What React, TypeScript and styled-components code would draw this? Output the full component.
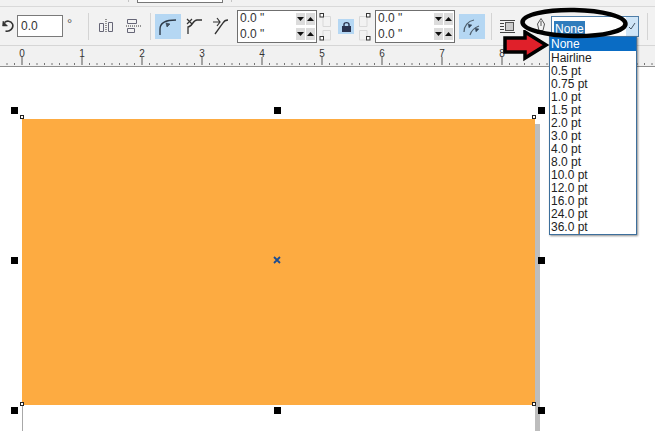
import React from 'react';
import styled, { createGlobalStyle } from 'styled-components';

const WIDTHS = ['None', 'Hairline', '0.5 pt', '0.75 pt', '1.0 pt', '1.5 pt', '2.0 pt', '3.0 pt', '4.0 pt', '8.0 pt', '10.0 pt', '12.0 pt', '16.0 pt', '24.0 pt', '36.0 pt'];

const HANDLES = [
  [14, 110], [277, 110], [541, 110],
  [14, 260], [541, 260],
  [14, 410], [277, 410], [541, 410],
];

const CORNERS = [
  [22, 117], [534, 117],
  [22, 404], [534, 404],
];

const Ruler = () => {
  const ticks: React.ReactNode[] = [];
  for (let i = -2; i < 86; i++) {
    const x = 22 + i * 7.5;
    const major = i % 8 === 0;
    ticks.push(
      <line key={i} x1={x} x2={x} y1={major ? 11 : 17} y2={19} stroke={major ? '#555' : '#777'} strokeWidth={1} />
    );
  }
  return (
    <svg width="655" height="20" viewBox="0 0 655 20">
      {ticks}
      {/* 9 and 10 sit under the open dropdown */}
      {Array.from({ length: 9 }, (_, n) => (
        <text key={n} x={22 + n * 60} y={11} textAnchor="middle" fontSize="10" fill="#333" fontFamily="Liberation Sans, sans-serif">
          {n}
        </text>
      ))}
    </svg>
  );
};

const RotateIcon = () => (
  <svg width="12" height="14" viewBox="0 0 12 14" fill="none" stroke="#333" strokeWidth="1.6">
    <path d="M2.5 3.5 C4.5 1.5 9 1.5 10.5 5 C12 9 8 13 3.5 12" />
    <path d="M0.5 7 L5.5 7 L1 2 Z" fill="#333" strokeWidth="0.5" />
  </svg>
);

const AlignVerticalIcon = () => (
  <svg width="16" height="16" viewBox="0 0 16 16" fill="none" stroke="#667" strokeWidth="1">
    <path d="M1.5 5.5 h4 v8 h-4 z M10.5 4.5 h4 v9 h-4 z" />
    <path d="M8 1 V15" stroke="#333" strokeDasharray="1 1" />
  </svg>
);

const AlignHorizontalIcon = () => (
  <svg width="16" height="16" viewBox="0 0 16 16" fill="none" stroke="#667" strokeWidth="1">
    <path d="M2.5 1.5 h9 v4 h-9 z M2.5 10.5 h7 v4 h-7 z" />
    <path d="M1 8 H16" stroke="#333" strokeDasharray="1 1" />
  </svg>
);

const FilletIcon = () => (
  <svg width="26" height="25" viewBox="0 0 26 25" fill="none" stroke="#2d3a48" strokeWidth="1.4">
    <path d="M5 21 V15 C5 9 10 6 21 6" />
    <path d="M11 9 L15 10 L12 13 Z" fill="#405060" strokeWidth="0.6" />
  </svg>
);

const ScallopIcon = () => (
  <svg width="17" height="18" viewBox="0 0 17 18" fill="none" stroke="#333" strokeWidth="1.3">
    <path d="M2 17 V10 C6 10 7 3 11 3 H16" />
    <path d="M1 2 L6 7 M6 2 L1 7" strokeWidth="1.2" />
  </svg>
);

const ChamferIcon = () => (
  <svg width="17" height="18" viewBox="0 0 17 18" fill="none" stroke="#333" strokeWidth="1.3">
    <path d="M3 17 L11 6 C12 4 13 3 16 3" />
    <path d="M1 5 H8 M5 1 L8 5 L5 9" strokeWidth="1.2" />
  </svg>
);

const RelativeCornerIcon = () => (
  <svg width="26" height="25" viewBox="0 0 26 25" fill="none" stroke="#50606e" strokeWidth="1.2">
    <path d="M5 18 C5 12 9 7 15 6" />
    <path d="M11 21 C12 17 15 14 20 12" />
    <path d="M9 10 L13 11 L10 14 Z M16 14 L20 15 L17 18 Z" fill="#2d4058" strokeWidth="0.5" />
  </svg>
);

const WrapIcon = () => (
  <svg width="15" height="15" viewBox="0 0 15 15" fill="none" stroke="#444" strokeWidth="1">
    <path d="M0 1.5 H15 M0 4.5 H4 M0 7.5 H4 M0 10.5 H4 M0 13.5 H15" />
    <rect x="5.5" y="3.5" width="8" height="8" fill="#ccc" stroke="#555" />
  </svg>
);

const PenIcon = () => (
  <svg width="10" height="17" viewBox="0 0 10 17" fill="none" stroke="#555" strokeWidth="1">
    <path d="M5 0.5 L8.5 6 L7 12.5 H3 L1.5 6 Z" />
    <path d="M5 3 V8 M1 15.5 H9" />
  </svg>
);

const LockIcon = () => (
  <svg width="11" height="11" viewBox="0 0 11 11" fill="none">
    <path d="M3 5 V3.5 C3 1 8 1 8 3.5 V5" stroke="#29324e" strokeWidth="1.4" />
    <rect x="1" y="5" width="9" height="6" fill="#29324e" />
  </svg>
);

const CornerLinkIcon = ({ flip }: { flip?: boolean }) => (
  <svg width="12" height="33" viewBox="0 0 12 33" fill="none" transform={flip ? 'scale(-1 1)' : undefined}>
    <path d="M0.5 6.5 H8 V16.5 H0.5 Z M0.5 20.5 H8 V30 H0.5 Z" stroke="#d8d8d8" />
    <rect x="7.5" y="3.5" width="3.5" height="3.5" stroke="#333" fill="#fff" />
    <rect x="7.5" y="26.5" width="3.5" height="3.5" stroke="#333" fill="#fff" />
  </svg>
);

const SpinRow = () => (
  <SpinnerRow>
    <SpinnerValue>0.0 "</SpinnerValue>
    <SpinButton>
      <svg width="7" height="4"><path d="M0 0 H7 L3.5 4 Z" fill="#111" /></svg>
    </SpinButton>
    <SpinButton>
      <svg width="7" height="4"><path d="M0 4 H7 L3.5 0 Z" fill="#111" /></svg>
    </SpinButton>
  </SpinnerRow>
);

const Spinner = ({ $ml }: { $ml: number }) => (
  <SpinnerGroup $ml={$ml}>
    <SpinRow />
    <SpinRow />
  </SpinnerGroup>
);

const App: React.FC = () => {
  return (
    <Page>
      <GlobalStyle />
      <TopStrip>
        <TabTick />
        <TopTab />
        <TabTick />
      </TopStrip>
      <Toolbar>
        <ToolSlot $ml={0}><RotateIcon /></ToolSlot>
        <AngleInput>0.0</AngleInput>
        <Degree>°</Degree>
        <Separator $ml={14} />
        <ToolSlot $ml={9}><AlignVerticalIcon /></ToolSlot>
        <ToolSlot $ml={11}><AlignHorizontalIcon /></ToolSlot>
        <Separator $ml={9} />
        <ActiveButton $ml={4}><FilletIcon /></ActiveButton>
        <ToolSlot $ml={5}><ScallopIcon /></ToolSlot>
        <ToolSlot $ml={9}><ChamferIcon /></ToolSlot>
        <Spinner $ml={8} />
        <ToolSlot $ml={2}><CornerLinkIcon flip /></ToolSlot>
        <LockButton><LockIcon /></LockButton>
        <ToolSlot $ml={5}><CornerLinkIcon /></ToolSlot>
        <Spinner $ml={4} />
        <ActiveButton $ml={4}><RelativeCornerIcon /></ActiveButton>
        <Separator $ml={6} />
        <ToolSlot $ml={8}><WrapIcon /></ToolSlot>
        <ToolSlot $ml={21}><PenIcon /></ToolSlot>
        <Combo>
          <ComboField><ComboSelection>None</ComboSelection></ComboField>
          <ComboArrow>
            <svg width="8" height="8" viewBox="0 0 8 8" fill="none" stroke="#456">
              <path d="M1 5 L3 7 L7 1" />
            </svg>
          </ComboArrow>
        </Combo>
        <Separator $ml={8} />
      </Toolbar>
      <RulerBar>
        <Ruler />
      </RulerBar>
      <Canvas>
        <PageEdge />
        <Shadow />
        <OrangeRect />
        {HANDLES.map(([x, y]) => (
          <Handle key={`${x}-${y}`} style={{ left: x - 3.5, top: y - 70.5 }} />
        ))}
        {CORNERS.map(([x, y]) => (
          <CornerNode key={`${x}-${y}`} style={{ left: x - 2, top: y - 69 }} />
        ))}
        <CenterMark viewBox="0 0 8 8">
          <path d="M1 1 L7 7 M7 1 L1 7" stroke="#1d4d90" strokeWidth="1.8" fill="none" />
        </CenterMark>
      </Canvas>
      <Dropdown>
        {WIDTHS.map((w, i) => (
          <DropdownItem key={w} $selected={i === 0}>{w}</DropdownItem>
        ))}
      </Dropdown>
      <EllipseMark viewBox="0 0 116 40">
        <ellipse cx="56" cy="17" rx="51.5" ry="13" fill="none" stroke="#000" strokeWidth="4.5" transform="rotate(1 56 17)" />
      </EllipseMark>
      <ArrowMark viewBox="0 0 46 32">
        <path d="M2 8 H22 V2 L43 15 L22 28 V22 H2 Z" fill="#e0202a" stroke="#000" strokeWidth="3.5" />
      </ArrowMark>
    </Page>
  );
};

export default App;

// Styles
const GlobalStyle = createGlobalStyle`
  html, body {
    margin: 0;
    padding: 0;
    background: #fff;
  }
`;

const Page = styled.div`
  position: relative;
  width: 655px;
  height: 431px;
  overflow: hidden;
  display: flex;
  flex-direction: column;
  background: #fff;
  font-family: "Liberation Sans", Arial, sans-serif;
`;

const TopStrip = styled.div`
  height: 6px;
  padding-left: 128px;
  display: flex;
  align-items: flex-start;
  gap: 8px;
  background: #f1f1f1;
  border-bottom: 1px solid #d9d9d9;
`;

const TabTick = styled.div`
  width: 1px;
  height: 2px;
  background: #c4c4c4;
`;

const TopTab = styled.div`
  box-sizing: border-box;
  width: 86px;
  height: 3px;
  background: #fff;
  border: 1px solid #777;
  border-top: none;
`;

const Toolbar = styled.div`
  box-sizing: border-box;
  height: 39px;
  padding-left: 2px;
  display: flex;
  align-items: center;
  background: #f2f2f2;
  border-bottom: 1px solid #d6d6d6;
`;

const ToolSlot = styled.div<{ $ml: number }>`
  margin-left: ${(p) => p.$ml}px;
  display: flex;
  align-items: center;
`;

const AngleInput = styled.div`
  box-sizing: border-box;
  width: 46px;
  height: 22px;
  margin-left: 3px;
  padding-left: 3px;
  background: #fff;
  border: 1px solid #7a7a7a;
  font-size: 12px;
  line-height: 20px;
  color: #333;
`;

const Degree = styled.div`
  width: 7px;
  margin-left: 4px;
  margin-bottom: 6px;
  font-size: 13px;
  color: #555;
`;

const Separator = styled.div<{ $ml: number }>`
  width: 1px;
  height: 27px;
  margin-left: ${(p) => p.$ml}px;
  background: #d4d4d4;
`;

const ActiveButton = styled.div<{ $ml: number }>`
  width: 26px;
  height: 25px;
  margin-left: ${(p) => p.$ml}px;
  background: #b5d7f3;
`;

const LockButton = styled.div`
  width: 16px;
  height: 15px;
  margin-left: 7px;
  display: flex;
  align-items: center;
  justify-content: center;
  background: #b5d7f3;
`;

const SpinnerGroup = styled.div<{ $ml: number }>`
  box-sizing: border-box;
  width: 80px;
  height: 33px;
  margin-left: ${(p) => p.$ml}px;
  margin-top: 1px;
  display: flex;
  flex-direction: column;
  background: #fff;
  border: 1px solid #6f6f6f;
`;

const SpinnerRow = styled.div`
  flex: 1;
  display: flex;
  align-items: center;
  gap: 1px;
  padding-right: 1px;
`;

const SpinnerValue = styled.div`
  flex: 1;
  padding-left: 2px;
  font-size: 12px;
  line-height: 15px;
  color: #333;
`;

const SpinButton = styled.div`
  width: 9px;
  height: 12px;
  display: flex;
  align-items: center;
  justify-content: center;
  background: #dcdcdc;
`;

const Combo = styled.div`
  box-sizing: border-box;
  width: 88px;
  height: 21px;
  margin-left: 5px;
  display: flex;
  background: #fff;
  border: 1px solid #4f7ea8;
`;

const ComboField = styled.div`
  flex: 1;
  padding: 2px 0 0 2px;
`;

const ComboSelection = styled.span`
  padding: 1px;
  background: #2f7cbc;
  color: #fff;
  font-size: 12px;
`;

const ComboArrow = styled.div`
  width: 12px;
  display: flex;
  align-items: center;
  justify-content: center;
  background: #cfe5f7;
`;

const RulerBar = styled.div`
  height: 20px;
  background: #f1f1f1;
  border-bottom: 1px solid #8f8f8f;
  line-height: 0;
`;

const Canvas = styled.div`
  position: relative;
  flex: 1;
  background: #fff;
`;

const OrangeRect = styled.div`
  position: absolute;
  left: 22px;
  top: 52px;
  width: 513px;
  height: 286px;
  background: #fdab41;
`;

const Shadow = styled.div`
  position: absolute;
  left: 535px;
  top: 57px;
  bottom: 0;
  width: 5px;
  background: #bdbdbd;
`;

const PageEdge = styled.div`
  position: absolute;
  left: 22px;
  top: 300px;
  bottom: 0;
  width: 1px;
  background: #a8a8a8;
`;

const Handle = styled.div`
  position: absolute;
  width: 7px;
  height: 7px;
  background: #000;
`;

const CornerNode = styled.div`
  position: absolute;
  box-sizing: border-box;
  width: 4px;
  height: 4px;
  background: #fff;
  border: 1px solid #222;
`;

const CenterMark = styled.svg`
  position: absolute;
  left: 273px;
  top: 189px;
  width: 8px;
  height: 8px;
`;

const Dropdown = styled.div`
  position: absolute;
  left: 549px;
  top: 36px;
  box-sizing: border-box;
  width: 88px;
  height: 199px;
  background: #fff;
  border: 1px solid #3d6f9c;
  box-shadow: 1px 1px 2px rgba(0, 0, 0, 0.45);
`;

const DropdownItem = styled.div<{ $selected: boolean }>`
  height: ${(p) => (p.$selected ? 14 : 13)}px;
  padding-left: 1px;
  font-size: 12px;
  line-height: 15px;
  color: ${(p) => (p.$selected ? '#fff' : '#222')};
  background: ${(p) => (p.$selected ? '#0a6cc4' : 'transparent')};
`;

const EllipseMark = styled.svg`
  position: absolute;
  left: 518px;
  top: 6px;
  width: 116px;
  height: 40px;
`;

const ArrowMark = styled.svg`
  position: absolute;
  left: 503px;
  top: 30px;
  width: 46px;
  height: 32px;
`;
